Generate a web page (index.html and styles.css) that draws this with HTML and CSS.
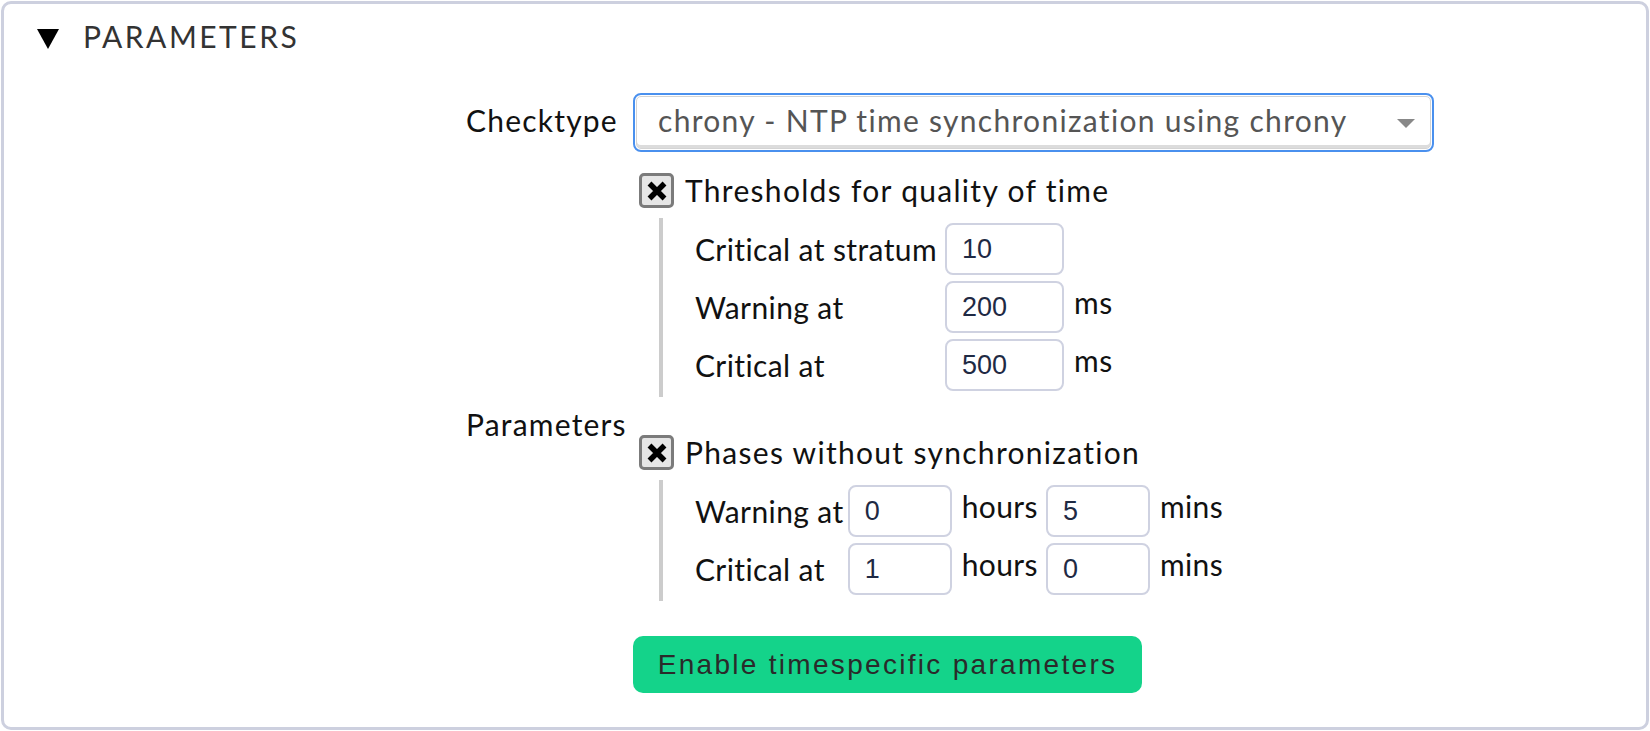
FILE: index.html
```html
<!DOCTYPE html>
<html>
<head>
<meta charset="utf-8">
<link rel="stylesheet" href="styles.css">
</head>
<body>
<div class="frame">
  <div class="header">
    <span class="tri"></span>
    <span class="title">PARAMETERS</span>
  </div>
  <div class="form">
    <div class="row row-select">
      <div class="label label-check">Checktype</div>
      <div class="content">
        <div class="select">
          <span class="select-text">chrony - NTP time synchronization using chrony</span>
          <svg class="select-arrow" width="18" height="9" viewBox="0 0 18 9"><polygon points="0,0 18,0 9,9" fill="#888"/></svg>
        </div>
      </div>
    </div>
    <div class="row row-params">
      <div class="label label-params">Parameters</div>
      <div class="content">
        <div class="check-head">
          <span class="cb"><svg width="20" height="20" viewBox="0 0 20 20"><path d="M2.5 2.5 L17.5 17.5 M17.5 2.5 L2.5 17.5" stroke="#000" stroke-width="5.5"/></svg></span>
          <span class="check-text">Thresholds for quality of time</span>
        </div>
        <div class="nested">
          <div class="grid grid-a">
            <span class="flabel">Critical at stratum</span><span class="inp inp-a">10</span><span></span>
            <span class="flabel">Warning at</span><span class="inp inp-a">200</span><span class="unit">ms</span>
            <span class="flabel">Critical at</span><span class="inp inp-a">500</span><span class="unit">ms</span>
          </div>
        </div>
        <div class="check-head head-2">
          <span class="cb"><svg width="20" height="20" viewBox="0 0 20 20"><path d="M2.5 2.5 L17.5 17.5 M17.5 2.5 L2.5 17.5" stroke="#000" stroke-width="5.5"/></svg></span>
          <span class="check-text">Phases without synchronization</span>
        </div>
        <div class="nested">
          <div class="grid grid-b">
            <span class="flabel">Warning at</span><span class="inp inp-b">0</span><span class="unit">hours</span><span class="inp inp-b">5</span><span class="unit">mins</span>
            <span class="flabel">Critical at</span><span class="inp inp-b">1</span><span class="unit">hours</span><span class="inp inp-b">0</span><span class="unit">mins</span>
          </div>
        </div>
        <button class="btn">Enable timespecific parameters</button>
      </div>
    </div>
  </div>
</div>
</body>
</html>
```

FILE: styles.css
```css
html, body {
  margin: 0;
  padding: 0;
  background: #ffffff;
}
body {
  font-family: "Lato", "Liberation Sans", sans-serif;
  color: #1a1a1a;
}
.frame {
  box-sizing: border-box;
  width: 1648px;
  height: 729px;
  margin: 1px;
  border: 3px solid #cdd0df;
  border-radius: 10px;
  background: #fff;
}
.header {
  display: flex;
  align-items: center;
  padding: 15px 0 0 33px;
  height: 34px;
}
.tri {
  width: 0;
  height: 0;
  border-left: 11px solid transparent;
  border-right: 11px solid transparent;
  border-top: 20px solid #000;
  margin-top: 6px;
}
.title {
  margin-left: 24px;
  font-size: 30px;
  line-height: 34px;
  letter-spacing: 2.5px;
  color: #333;
}
.form {
  margin: 43px 0 0 462px;
  display: flex;
  flex-direction: column;
  gap: 21px;
}
.row {
  display: flex;
  align-items: center;
}
.label {
  width: 167px;
  flex: none;
  font-size: 30px;
  line-height: 34px;
  letter-spacing: 1.2px;
  color: #111;
}
.label-check {
  margin-bottom: 5px;
}
.label-params {
  margin-bottom: 16px;
}
.content {
  display: flex;
  flex-direction: column;
  align-items: flex-start;
}
.select {
  box-sizing: border-box;
  margin-left: 3px;
  width: 795px;
  height: 53px;
  border: 1px solid #d4d4d4;
  border-radius: 5px;
  box-shadow: inset 0 -3px 0 #dcdcdc;
  outline: 2px solid #4a90ee;
  outline-offset: 1px;
  display: flex;
  align-items: center;
  justify-content: space-between;
  padding: 0 15px 6px 21px;
}
.select-text {
  font-size: 30px;
  line-height: 34px;
  letter-spacing: 1.3px;
  color: #555;
}
.select-arrow {
  display: block;
  margin-top: 8px;
}
.check-head {
  display: flex;
  align-items: center;
  height: 41px;
  margin-left: 6px;
}
.head-2 {
  margin-top: 35px;
}
.cb {
  box-sizing: border-box;
  width: 35px;
  height: 35px;
  border: 3px solid #7b7b7b;
  border-radius: 5px;
  background: #e6e6e6;
  display: flex;
  align-items: center;
  justify-content: center;
}
.cb svg {
  display: block;
}
.check-text {
  margin-left: 11px;
  font-size: 30px;
  line-height: 41px;
  letter-spacing: 1.3px;
  color: #111;
}
.nested {
  margin: 7px 0 0 26px;
  border-left: 4px solid #cccccc;
  padding: 5px 0 6px 32px;
}
.grid {
  display: grid;
  column-gap: 8px;
  row-gap: 6px;
  align-items: center;
}
.grid-a {
  grid-template-columns: auto 119px auto;
}
.grid-b {
  grid-template-columns: auto 104px auto 104px auto;
}
.grid-b .flabel {
  margin-right: -4px;
}
.flabel, .unit {
  font-size: 30px;
  line-height: 34px;
  letter-spacing: 0.4px;
  color: #111;
}
.unit {
  margin-left: 2px;
  margin-top: -10px;
}
.inp {
  box-sizing: border-box;
  height: 52px;
  border: 2px solid #cfd2e1;
  border-radius: 8px;
  background: #fff;
  font-family: "Liberation Sans", Arial, sans-serif;
  font-size: 27px;
  line-height: 48px;
  padding-left: 15px;
  color: #1f2a44;
}
.btn {
  margin-top: 35px;
  box-sizing: border-box;
  width: 509px;
  height: 57px;
  border: none;
  border-radius: 10px;
  background: #14d38a;
  font-family: "Liberation Sans", Arial, sans-serif;
  font-size: 28px;
  letter-spacing: 2.3px;
  color: #2a2a2a;
  padding: 0;
}
```
